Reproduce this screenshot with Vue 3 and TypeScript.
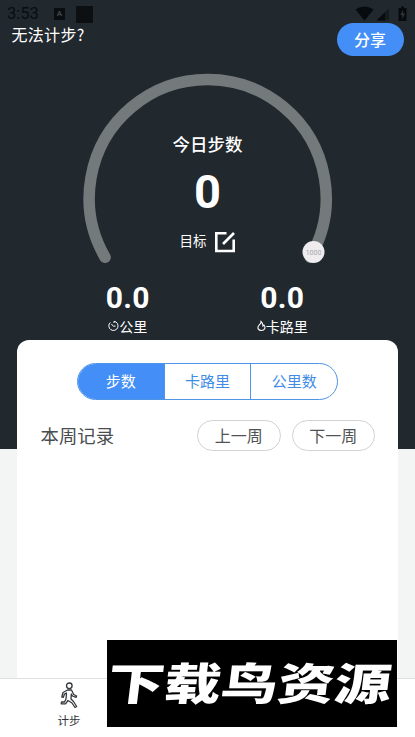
<script setup lang="ts">
import { ref } from 'vue'

// --- Daily totals ---
const steps = ref(0)
const goal = ref(1000)
const distance = ref('0.0')
const calories = ref('0.0')

// --- Chart tabs ---
const tabs = [
  { id: 'steps', name: '步数' },
  { id: 'calories', name: '卡路里' },
  { id: 'distance', name: '公里数' }
]
const activeTab = ref('steps')
</script>

<template>
  <div class="page">
    <!-- ===== TOP BAR ===== -->
    <header class="top-bar">
      <div class="status-left">
        <div class="status-row">
          <span class="time">3:53</span>
          <span class="app-badge">A</span>
          <span class="app-block"></span>
        </div>
        <div class="help-link">无法计步?</div>
      </div>
      <div class="status-right">
        <svg class="status-icons" width="54" height="17" viewBox="0 0 54 17">
          <path d="M1.500 3.500 Q10.500 -2.500 19.500 3.500 L10.500 14.500Z" />
          <path d="M35 2.500 V14.500 H22.500Z" fill-opacity=".45" />
          <path d="M31 6.500 V14.500 H22.500Z" />
          <path d="M44.500 2 H47 V0.500 H50 V2 H52.500 V15 H44.500Z" />
          <path d="M49 4 L46.300 9 H48.300 V13 L51 7.500 H49Z" fill="#30373b" />
        </svg>
        <button class="share-btn">分享</button>
      </div>
    </header>

    <!-- ===== STEP GAUGE ===== -->
    <section class="gauge">
      <svg class="gauge-ring" width="260" height="200" viewBox="0 0 260 200">
        <path
          d="M27.100 189.300 A118.500 118.500 0 1 1 232.300 189.300"
          fill="none"
          stroke="#74797b"
          stroke-width="11.500"
          stroke-linecap="round"
        />
        <circle cx="235.500" cy="184" r="11" fill="#eeecee" />
        <text x="235.500" y="187" text-anchor="middle">{{ goal }}</text>
      </svg>
      <div class="gauge-body">
        <div class="gauge-title">今日步数</div>
        <div class="gauge-value">{{ steps }}</div>
        <div class="gauge-goal">
          <span>目标</span>
          <svg width="22" height="22" viewBox="0 0 22 22" fill="none" stroke="#fff" stroke-width="2.600">
            <path d="M12.500 2.300 H2.300 V20 H19.700 V8.500" />
            <path d="M9 13 L20 2" />
          </svg>
        </div>
      </div>
    </section>

    <!-- ===== TOTALS ===== -->
    <section class="totals">
      <div class="total">
        <div class="total-value">{{ distance }}</div>
        <div class="total-label">
          <svg width="11" height="12" viewBox="0 0 11 12" fill="none" stroke="#fff" stroke-width="1">
            <path d="M2.300 2.500 A4.600 4.600 0 1 0 6 1.300 V3 M3.400 4 L5.500 6.300 L7.500 6" />
          </svg>
          <span>公里</span>
        </div>
      </div>
      <div class="total">
        <div class="total-value">{{ calories }}</div>
        <div class="total-label">
          <svg width="9" height="12" viewBox="0 0 9 12" fill="none" stroke="#fff" stroke-width="1.100">
            <path d="M4 1.500 Q4.300 3.500 2.200 5 C-.5 8 1.500 10.500 4.500 10.500 C7.700 10.500 9 7.500 7 5 L6 6 Q6 3 4 1.500Z" />
          </svg>
          <span>卡路里</span>
        </div>
      </div>
    </section>

    <!-- ===== WEEK RECORD CARD ===== -->
    <main class="card">
      <div class="tabs">
        <div
          v-for="tab in tabs"
          :key="tab.id"
          class="tab"
          :class="{ active: activeTab === tab.id }"
          @click="activeTab = tab.id"
        >
          {{ tab.name }}
        </div>
      </div>
      <div class="week-row">
        <div class="week-title">本周记录</div>
        <button class="week-btn">上一周</button>
        <button class="week-btn">下一周</button>
      </div>
    </main>

    <!-- ===== BOTTOM NAV ===== -->
    <nav class="bottom-nav">
      <div class="nav-item">
        <svg width="18" height="27" viewBox="0 0 18 27" fill="none" stroke="#33383c" stroke-width="1.300" stroke-linejoin="round">
          <circle cx="9.300" cy="3.800" r="2.800" />
          <path d="M7.500 8 L3 10.500 L1.800 15 L3.300 15.400 L4.500 12 L6.500 11 L6 17 L4.500 20 H1.500 L1.200 21.800 H5.500 L8 18.500 L12 21 L15 25.500 L16.700 24.500 L13.500 19.500 L11 17 L11.300 12 L12.500 14 L16 15.400 L16.600 14 L13.700 12.500 L11.500 8Z" />
        </svg>
        <span>计步</span>
      </div>
    </nav>

    <!-- Logo banner over the page corner -->
    <div class="banner"><span>下载鸟资源</span></div>
  </div>
</template>

<style>
body {
  margin: 0;
}
</style>

<style scoped>
.page {
  position: relative;
  display: flex;
  flex-direction: column;
  width: 415px;
  height: 737px;
  overflow: hidden;
  background: linear-gradient(#21282e 449px, #f3f5f5 449px);
  font-family: 'Noto Sans CJK SC', sans-serif;
  color: #fff;
}

/* --- Top bar --- */
.top-bar {
  display: flex;
  justify-content: space-between;
  height: 68px;
}

.status-row {
  display: flex;
  align-items: center;
  height: 22px;
  padding: 3px 0 0 7px;
}

.time {
  width: 47px;
  font: 16.5px/16px Roboto, sans-serif;
  color: #090d10;
}

.app-badge {
  width: 11px;
  height: 12px;
  margin-right: 11px;
  background: #0a0e11;
  color: #41474b;
  font: bold 8px/12px Roboto, sans-serif;
  text-align: center;
}

.app-block {
  width: 17px;
  height: 17px;
  background: #0c1013;
}

.help-link {
  padding-left: 11.5px;
  font-size: 16px;
  line-height: 18px;
  letter-spacing: 0.3px;
}

.status-right {
  display: flex;
  flex-direction: column;
  align-items: flex-end;
  padding: 6px 7px 0 0;
}

.status-icons {
  flex: none;
  fill: #080b0d;
}

.share-btn {
  width: 67px;
  height: 33px;
  margin-right: 4.5px;
  padding: 0;
  border: none;
  border-radius: 17px;
  background: #438ff7;
  color: #fff;
  font-family: inherit;
  font-size: 16px;
  font-weight: 500;
  line-height: 31px;
}

/* --- Gauge --- */
.gauge {
  display: grid;
  justify-content: center;
  height: 213px;
}

.gauge-ring,
.gauge-body {
  grid-area: 1 / 1;
}

.gauge-ring text {
  fill: #aaa;
  font: 7px Roboto, sans-serif;
}

.gauge-body {
  display: flex;
  flex-direction: column;
  align-items: center;
  padding-top: 64px;
}

.gauge-title {
  font-size: 17.5px;
  font-weight: 500;
  line-height: 23px;
}

.gauge-value {
  height: 68px;
  font: bold 47px/73px Roboto, sans-serif;
}

.gauge-goal {
  display: flex;
  align-items: center;
  gap: 7px;
  font-size: 13.5px;
  line-height: 34px;
}

.gauge-goal svg {
  margin-top: 4px;
}

/* --- Totals --- */
.totals {
  display: flex;
  justify-content: center;
  height: 59px;
  padding-right: 5px;
}

.total {
  display: flex;
  flex-direction: column;
  align-items: center;
  width: 154.5px;
}

.total-value {
  font: bold 30px/34px Roboto, sans-serif;
  letter-spacing: 0.3px;
}

.total-label {
  display: flex;
  align-items: center;
  font-size: 14px;
  line-height: 22px;
}

/* --- Card --- */
.card {
  flex: 1;
  margin: 0 17px;
  border-radius: 12px 12px 0 0;
  background: #fff;
}

.tabs {
  display: flex;
  box-sizing: border-box;
  width: 261px;
  height: 37px;
  margin: 23px auto 0 60px;
  border: 1px solid #5094e5;
  border-radius: 19px;
  overflow: hidden;
}

.tab {
  flex: 1;
  color: #438ce5;
  font-size: 15px;
  line-height: 34px;
  text-align: center;
}

.tab + .tab {
  border-left: 1px solid #5094e5;
}

.tab.active {
  background: #438ff7;
  color: #fff;
}

.week-row {
  display: flex;
  align-items: center;
  gap: 11px;
  margin: 20px 23px 0 23.5px;
}

.week-title {
  flex: 1;
  margin-top: -2px;
  color: #4a4d50;
  font-size: 18.4px;
  line-height: 28px;
}

.week-btn {
  width: 83.5px;
  height: 31px;
  padding: 0;
  border: 1px solid #d2d2d2;
  border-radius: 16px;
  background: #fff;
  color: #505356;
  font-family: inherit;
  font-size: 16px;
  line-height: 29px;
}

/* --- Bottom nav --- */
.bottom-nav {
  box-sizing: border-box;
  height: 59px;
  padding: 3px 0 0 38px;
  border-top: 1px solid #dfe0e0;
  background: #fff;
}

.nav-item {
  display: flex;
  flex-direction: column;
  align-items: center;
  width: 62px;
  color: #303438;
  font-size: 11.5px;
  line-height: 22px;
}

/* --- Banner --- */
.banner {
  position: absolute;
  left: 107px;
  top: 640px;
  display: flex;
  align-items: center;
  justify-content: center;
  width: 290px;
  height: 87px;
  background: #000;
}

.banner span {
  font-size: 44px;
  font-weight: 900;
  line-height: 82px;
  margin: 0 5px 5px 0;
  white-space: nowrap;
  transform: skewX(-7deg) scaleX(1.29);
}
</style>
